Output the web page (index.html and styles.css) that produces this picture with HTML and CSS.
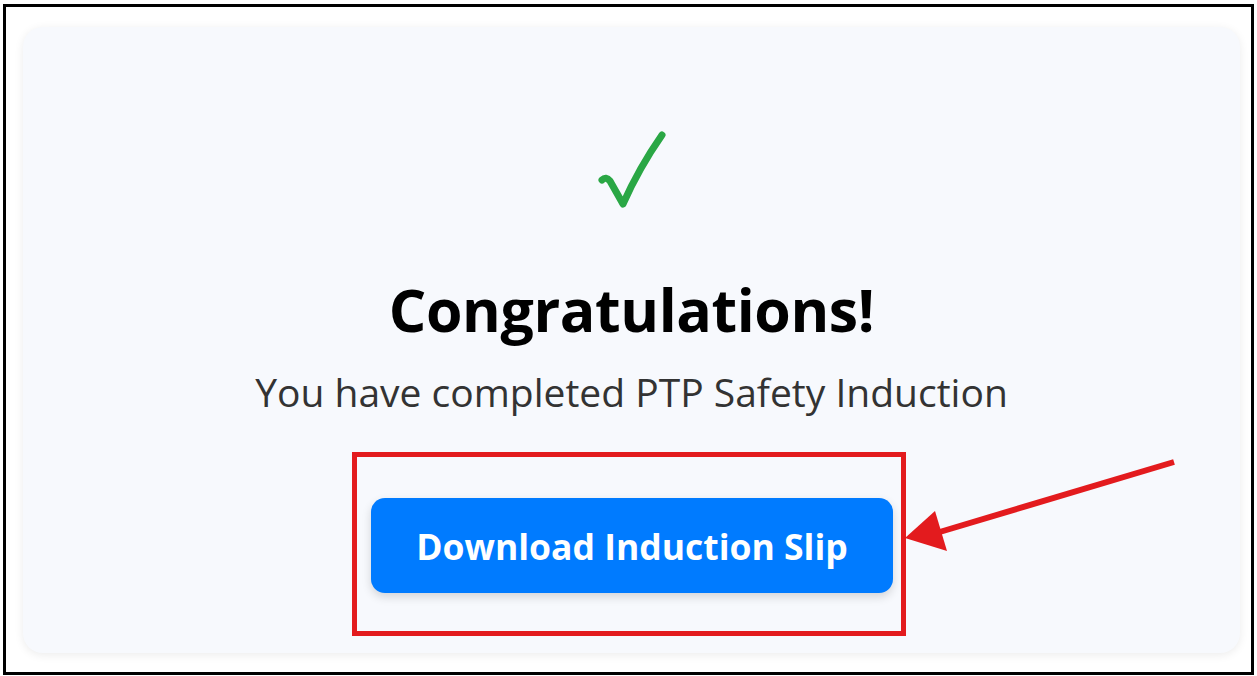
FILE: index.html
```html
<!DOCTYPE html>
<html lang="en">
<head>
<meta charset="utf-8">
<title>Induction Complete</title>
<link rel="stylesheet" href="styles.css">
</head>
<body>
<div class="frame">
  <div class="card">
    <svg class="check" width="70" height="80" viewBox="0 0 70 80" aria-hidden="true">
      <path d="M5 50 Q9 46 13 51 L26 74 Q42 38 65 5" fill="none" stroke="#2aa745" stroke-width="7" stroke-linecap="round" stroke-linejoin="round"/>
    </svg>
    <h1 class="title">Congratulations!</h1>
    <p class="subtitle">You have completed PTP Safety Induction</p>
    <div class="highlight">
      <button class="btn">Download Induction Slip</button>
    </div>
  </div>
  <svg class="arrow" width="300" height="120" viewBox="0 0 300 120" aria-hidden="true">
    <line x1="271" y1="8" x2="30" y2="80" stroke="#e31b1e" stroke-width="6"/>
    <polygon points="2,84 32,57 44,97" fill="#e31b1e"/>
  </svg>
</div>
</body>
</html>
```
FILE: styles.css
```css
* { box-sizing: border-box; }
html, body { margin: 0; padding: 0; background: #fff; }
body {
  padding: 4px 3px 0 3px;
  font-family: "Open Sans", "Noto Sans", "DejaVu Sans", sans-serif;
}
.frame {
  position: relative;
  border: 3px solid #000;
  height: 671px;
  padding: 20px 11px 19px 17px;
  background: #fff;
}
.card {
  height: 100%;
  background: #f7f9fd;
  border-radius: 20px;
  box-shadow: 0 2px 10px rgba(0,0,0,0.08);
  display: flex;
  flex-direction: column;
  align-items: center;
  padding-top: 103px;
}
.check {
  display: block;
  width: 70px;
  height: 80px;
  flex: none;
}
.title {
  margin: 64px 0 0 0;
  font-size: 59px;
  line-height: 70px;
  font-weight: 700;
  color: #000;
  letter-spacing: -0.4px;
}
.subtitle {
  margin: 23px 0 0 0;
  font-size: 39px;
  line-height: 50px;
  color: #333;
  font-weight: 400;
}
.highlight {
  margin: 35px 5px 0 0;
  border: 5px solid #e31b1e;
  padding: 41px 8px 38px 14px;
}
.btn {
  display: block;
  width: 522px;
  height: 95px;
  border: none;
  border-radius: 14px;
  background: #007bff;
  color: #fff;
  font-family: inherit;
  font-size: 35.5px;
  font-weight: 700;
  box-shadow: 0 4px 10px rgba(0,0,0,0.15);
}
.arrow {
  position: absolute;
  left: 897px;
  top: 447px;
}
```
